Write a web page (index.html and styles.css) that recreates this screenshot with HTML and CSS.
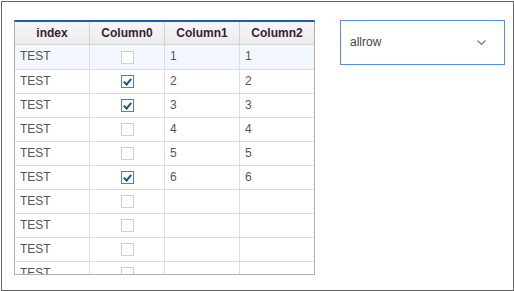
FILE: index.html
```html
<!DOCTYPE html>
<html lang="en">
<head>
  <meta charset="UTF-8" />
  <title>Grid</title>
  <link rel="stylesheet" href="styles.css">
</head>
<body>
  <div id="frame">
    <div class="grid">
      <div class="row head">
        <div class="cell">index</div>
        <div class="cell">Column0</div>
        <div class="cell">Column1</div>
        <div class="cell">Column2</div>
      </div>
      <div class="row first">
        <div class="cell">TEST</div>
        <div class="cell"><span class="chk"></span></div>
        <div class="cell">1</div>
        <div class="cell">1</div>
      </div>
      <div class="row">
        <div class="cell">TEST</div>
        <div class="cell"><span class="chk on"></span></div>
        <div class="cell">2</div>
        <div class="cell">2</div>
      </div>
      <div class="row">
        <div class="cell">TEST</div>
        <div class="cell"><span class="chk on"></span></div>
        <div class="cell">3</div>
        <div class="cell">3</div>
      </div>
      <div class="row">
        <div class="cell">TEST</div>
        <div class="cell"><span class="chk"></span></div>
        <div class="cell">4</div>
        <div class="cell">4</div>
      </div>
      <div class="row">
        <div class="cell">TEST</div>
        <div class="cell"><span class="chk"></span></div>
        <div class="cell">5</div>
        <div class="cell">5</div>
      </div>
      <div class="row">
        <div class="cell">TEST</div>
        <div class="cell"><span class="chk on"></span></div>
        <div class="cell">6</div>
        <div class="cell">6</div>
      </div>
      <div class="row">
        <div class="cell">TEST</div>
        <div class="cell"><span class="chk"></span></div>
        <div class="cell"></div>
        <div class="cell"></div>
      </div>
      <div class="row">
        <div class="cell">TEST</div>
        <div class="cell"><span class="chk"></span></div>
        <div class="cell"></div>
        <div class="cell"></div>
      </div>
      <div class="row">
        <div class="cell">TEST</div>
        <div class="cell"><span class="chk"></span></div>
        <div class="cell"></div>
        <div class="cell"></div>
      </div>
      <div class="row">
        <div class="cell">TEST</div>
        <div class="cell"><span class="chk"></span></div>
        <div class="cell"></div>
        <div class="cell"></div>
      </div>
    </div>

    <div class="combo">
      <span>allrow</span>
      <svg width="9" height="6" viewBox="0 0 9 6"><path d="M0.5 0.5 L4.5 4.5 L8.5 0.5" fill="none" stroke="#777" stroke-width="1.2"/></svg>
    </div>
  </div>
</body>
</html>
```

FILE: styles.css
```css
body {
  margin: 0;
  font-family: "Liberation Sans", Arial, sans-serif;
  font-size: 12px;
  background: #fff;
}
#frame {
  margin: 1px 0 0 1px;
  width: 511px;
  height: 288px;
  border: 1px solid #666;
  display: flex;
  align-items: flex-start;
}
.grid {
  margin: 18px 0 0 12px;
  width: 299px;
  height: 252px;
  border: 1px solid #b0aeb0;
  border-top: 2px solid #1d5cb4;
  overflow: hidden;
  flex: none;
}
.row {
  display: flex;
  height: 23px;
  border-bottom: 1px solid #dcdcdc;
}
.row.first {
  height: 24px;
  background: #f1f7fd;
}
.cell {
  width: 75px;
  border-right: 1px solid #dcdfe3;
  display: flex;
  align-items: center;
  padding: 0 0 2px 5px;
  box-sizing: border-box;
  color: #555;
  flex: none;
}
.cell:last-child {
  border-right: none;
  width: 74px;
}
.cell:nth-child(2) {
  justify-content: center;
  padding: 0;
}
.head {
  height: 22px;
  background: linear-gradient(#f6f6f6, #ececec);
  border-bottom: 1px solid #d4d4d4;
}
.head .cell {
  justify-content: center;
  padding: 0;
  font-weight: bold;
  color: #3a1c34;
  border-right-color: #d2d2d2;
}
.chk {
  width: 11px;
  height: 11px;
  border: 1px solid #cfcfcf;
  background: #fff;
  display: inline-block;
  position: relative;
}
.chk.on {
  border-color: #4d7ec6;
}
.chk.on::after {
  content: "";
  position: absolute;
  left: 3px;
  top: 1px;
  width: 3px;
  height: 6px;
  border: solid #1f4f9a;
  border-width: 0 2px 2px 0;
  transform: rotate(40deg);
}
.combo {
  margin: 18px 0 0 25px;
  width: 165px;
  height: 45px;
  border: 1px solid #5a8bd5;
  box-sizing: border-box;
  display: flex;
  align-items: center;
  justify-content: space-between;
  padding: 0 18px 1px 9px;
  color: #444;
}
.combo svg {
  margin-top: 1px;
}
```
